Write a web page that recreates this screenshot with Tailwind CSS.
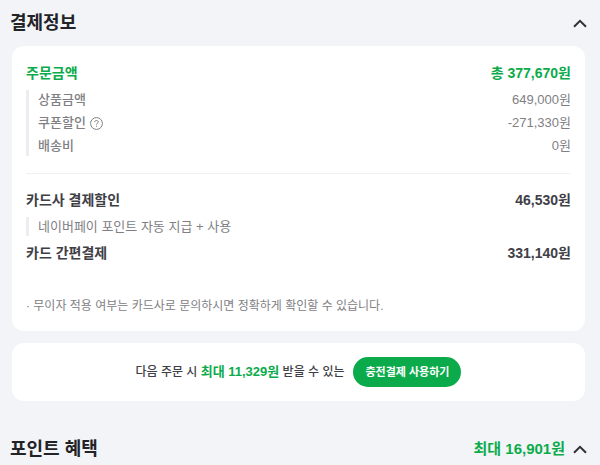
<!DOCTYPE html>
<html lang="ko">
<head>
  <meta charset="UTF-8" />
  <meta name="viewport" content="width=device-width, initial-scale=1.0"/>
  <title>결제정보</title>
  <script src="https://cdn.jsdelivr.net/npm/@tailwindcss/browser@4"></script>
</head>
<body class="bg-[#f2f4f7] font-['Liberation_Sans','Noto_Sans_CJK_KR',sans-serif] text-[#3f4046] overflow-x-hidden">

  <main>

    <!-- PAYMENT INFO -->
    <section>
      <header class="flex items-center justify-between h-[46px] pl-[10px] pr-[13px]">
        <h2 class="text-lg font-bold text-[#222327]">결제정보</h2>
        <button type="button" aria-label="결제정보 접기" class="text-[#303038]">
          <svg class="w-[14px] h-[9px]" viewBox="0 0 14 9" fill="none" stroke="currentColor" stroke-width="2"><path d="M1 7.8l6-6 6 6"/></svg>
        </button>
      </header>

      <div class="ml-3 mr-[15px] bg-white rounded-xl px-[14px] pt-4 pb-[15px]">
        <div class="flex justify-between text-sm leading-[22px] font-bold text-[#0bab4b]">
          <span>주문금액</span>
          <span>총 377,670원</span>
        </div>
        <dl class="mt-[6px] border-l-3 border-[#ebedf1] pl-[9px] text-[13px] leading-5 text-[#808084] flex flex-col gap-[3px]">
          <div class="flex justify-between">
            <dt class="font-medium">상품금액</dt>
            <dd>649,000원</dd>
          </div>
          <div class="flex justify-between">
            <dt class="font-medium flex items-center gap-1">쿠폰할인
              <button type="button" aria-label="쿠폰할인 도움말">
                <svg class="w-[13px] h-[13px]" viewBox="0 0 13 13" fill="none" stroke="currentColor"><circle cx="6.5" cy="6.5" r="5.9"/><path d="M4.7 5.2c0-1.1.8-1.7 1.8-1.7s1.8.6 1.8 1.5c0 1.2-1.8 1.2-1.8 2.6M6.5 8.7v1.1"/></svg>
              </button>
            </dt>
            <dd>-271,330원</dd>
          </div>
          <div class="flex justify-between">
            <dt class="font-medium">배송비</dt>
            <dd>0원</dd>
          </div>
        </dl>

        <hr class="mt-[17px] mb-[15px] border-[#f0f1f4]" />

        <div class="flex justify-between text-sm leading-[22px] font-bold">
          <span>카드사 결제할인</span>
          <span>46,530원</span>
        </div>
        <p class="my-[6px] border-l-3 border-[#ebedf1] pl-[9px] text-[13px] leading-[19px] text-[#808084]">네이버페이 포인트 자동 지급 + 사용</p>
        <div class="flex justify-between text-sm leading-[22px] font-bold">
          <span>카드 간편결제</span>
          <span>331,140원</span>
        </div>

        <p class="mt-8 text-xs leading-5 text-[#808084]">· 무이자 적용 여부는 카드사로 문의하시면 정확하게 확인할 수 있습니다.</p>
      </div>
    </section>

    <!-- CHARGE PAYMENT BANNER -->
    <section class="mt-3 ml-3 mr-[15px] bg-white rounded-xl py-[14px] flex items-center justify-center gap-[9px]">
      <p class="text-xs font-medium">다음 주문 시 <strong class="text-[13px] font-bold text-[#0bab4b]">최대 11,329원</strong> 받을 수 있는</p>
      <button type="button" class="h-[30px] px-3 rounded-full bg-[#0bab4b] text-white text-[11px] font-bold">충전결제 사용하기</button>
    </section>

    <!-- POINT BENEFITS -->
    <section class="mt-7">
      <header class="flex items-center justify-between h-[40px] pl-[10px] pr-[13px]">
        <h2 class="text-lg font-bold text-[#222327]">포인트 혜택</h2>
        <button type="button" aria-label="포인트 혜택 접기" class="flex items-center gap-2 text-[#303038]">
          <span class="text-[15px] font-bold text-[#0bab4b]">최대 16,901원</span>
          <svg class="w-[14px] h-[9px]" viewBox="0 0 14 9" fill="none" stroke="currentColor" stroke-width="2"><path d="M1 7.8l6-6 6 6"/></svg>
        </button>
      </header>
    </section>

  </main>
</body>
</html>
